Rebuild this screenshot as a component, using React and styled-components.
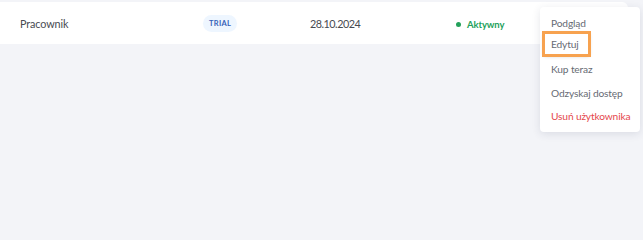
import React from "react";
import styled, { createGlobalStyle } from "styled-components";

const GlobalStyle = createGlobalStyle`
  html, body {
    margin: 0;
    padding: 0;
    background: #f3f4f8;
    font-family: Lato, "Noto Sans", sans-serif;
  }
`;

const Page = styled.div`
  position: relative;
  width: 643px;
  height: 200px;
  padding-top: 2px;
  box-sizing: border-box;
  overflow: hidden;
`;

const Row = styled.div`
  display: grid;
  grid-template-columns: 183px 107px 146px 1fr;
  align-items: center;
  width: 628px;
  height: 42px;
  padding-left: 20px;
  box-sizing: border-box;
  background: #fff;
  border-radius: 0 6px 6px 0;
`;

const Cell = styled.div`
  font-size: 10.8px;
  color: #484b51;
  letter-spacing: ${(p) => (p.$tight ? "-0.5px" : "-0.1px")};
`;

const Badge = styled.span`
  display: inline-flex;
  align-items: center;
  height: 17px;
  padding: 0 6px;
  border-radius: 9px;
  background: #eef6ff;
  color: #3662b8;
  font-size: 7.5px;
  font-weight: 700;
  letter-spacing: 0.3px;
`;

const Status = styled.span`
  display: inline-flex;
  align-items: center;
  gap: 6px;
  color: #23a15b;
  font-size: 9.5px;
  font-weight: 700;
  &:before {
    content: "";
    width: 5px;
    height: 5px;
    border-radius: 50%;
    background: #23a15b;
  }
`;

const Menu = styled.ul`
  position: absolute;
  top: 7px;
  left: 540px;
  width: 100px;
  margin: 0;
  padding: 4px 0 5px;
  list-style: none;
  background: #fff;
  border-radius: 4px;
  box-shadow: 0 2px 8px rgba(40, 50, 80, 0.12);
`;

const Item = styled.li`
  height: 23.3px;
  display: flex;
  align-items: center;
`;

const Action = styled.span`
  display: inline-flex;
  align-items: center;
  height: ${(p) => (p.$focused ? "20px" : "21px")};
  margin-left: ${(p) => (p.$focused ? "5px" : "11px")};
  margin-top: ${(p) => (p.$focused ? "-3px" : "0")};
  padding: ${(p) => (p.$focused ? "0 9px 0 6px" : "0")};
  font-size: 10.2px;
  letter-spacing: -0.15px;
  color: ${(p) => (p.$danger ? "#e5484d" : "#676b74")};
  white-space: nowrap;
  ${(p) =>
    p.$focused &&
    `
    outline: 3px solid #f7a24f;
    box-shadow: 0 1px 4px 1px rgba(0,0,0,0.22);
  `}
`;

const actions = [
  { label: "Podgląd" },
  { label: "Edytuj", focused: true },
  { label: "Kup teraz" },
  { label: "Odzyskaj dostęp" },
  { label: "Usuń użytkownika", danger: true },
];

const App = () => (
  <>
    <GlobalStyle />
    <Page>
      <Row>
        <Cell>Pracownik</Cell>
        <Cell>
          <Badge>TRIAL</Badge>
        </Cell>
        <Cell $tight>28.10.2024</Cell>
        <Cell>
          <Status>Aktywny</Status>
        </Cell>
      </Row>
      <Menu>
        {actions.map((a) => (
          <Item key={a.label}>
            <Action $focused={a.focused} $danger={a.danger}>
              {a.label}
            </Action>
          </Item>
        ))}
      </Menu>
    </Page>
  </>
);

export default App;
